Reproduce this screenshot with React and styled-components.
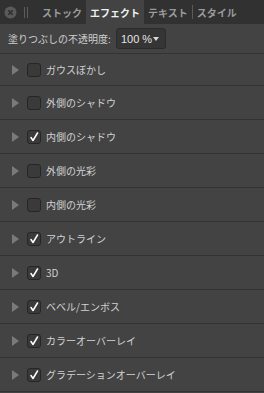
import React from "react";
import styled, { createGlobalStyle } from "styled-components";

const GlobalStyle = createGlobalStyle`
  html, body {
    margin: 0;
    padding: 0;
    background: #434343;
  }
  body {
    font-family: "Noto Sans CJK JP", "Noto Sans", sans-serif;
  }
`;

const Panel = styled.div`
  width: 264px;
  height: 393px;
  overflow: hidden;
  background: #434343;
  display: flex;
  flex-direction: column;
`;

const TabBar = styled.div`
  display: flex;
  align-items: stretch;
  height: 24px;
  background: #313131;
  flex-shrink: 0;
`;

const WindowControls = styled.div`
  display: flex;
  align-items: center;
  width: 34px;
  padding-left: 4px;
  gap: 7px;
`;

const Tab = styled.div`
  display: flex;
  align-items: center;
  padding: 0 ${({ $pad }) => $pad || 3}px;
  font-size: 10px;
  font-weight: bold;
  color: ${({ $active }) => ($active ? "#f0f0f0" : "#9b9b9b")};
  background: ${({ $active }) => ($active ? "#434343" : "transparent")};
`;

const TabDivider = styled.div`
  width: 1px;
  height: 14px;
  align-self: center;
  background: #5a5a5a;
`;

const OpacityRow = styled.div`
  display: flex;
  align-items: center;
  height: 29px;
  padding-left: 8px;
  gap: 5px;
  border-bottom: 1px solid #333;
  flex-shrink: 0;
`;

const Label = styled.span`
  font-size: 10px;
  color: #cfcfcf;
`;

const Dropdown = styled.div`
  display: flex;
  align-items: center;
  justify-content: space-between;
  box-sizing: border-box;
  width: 50px;
  height: 21px;
  padding: 0 6px 0 4px;
  background: #353535;
  border: 1px solid #2b2b2b;
  border-radius: 3px;
  font-family: "Liberation Sans", "Noto Sans", sans-serif;
  font-size: 11px;
  color: #e4e4e4;
  flex-shrink: 0;
`;

const Caret = styled.span`
  width: 0;
  height: 0;
  border-left: 3px solid transparent;
  border-right: 3px solid transparent;
  border-top: 4px solid #d8d8d8;
`;

const List = styled.div`
  display: flex;
  flex-direction: column;
`;

const Row = styled.div`
  display: flex;
  align-items: center;
  height: 33px;
  border-bottom: 1px solid #333;
  padding-left: 12px;

  &:first-child {
    height: 31px;
  }
`;

const Arrow = styled.span`
  width: 0;
  height: 0;
  border-top: 5px solid transparent;
  border-bottom: 5px solid transparent;
  border-left: 7px solid #7a7a7a;
  margin-right: 8px;
`;

const Box = styled.div`
  box-sizing: border-box;
  width: 14px;
  height: 14px;
  border: 1px solid #262626;
  border-radius: 3px;
  background: #3a3a3a;
  display: flex;
  align-items: center;
  justify-content: center;
  margin-right: 5px;
`;

const RowText = styled.span`
  font-size: 10px;
  color: #d2d2d2;
  white-space: nowrap;
`;

const effects = [
  { name: "ガウスぼかし", on: false },
  { name: "外側のシャドウ", on: false },
  { name: "内側のシャドウ", on: true },
  { name: "外側の光彩", on: false },
  { name: "内側の光彩", on: false },
  { name: "アウトライン", on: true },
  { name: "3D", on: true },
  { name: "ベベル/エンボス", on: true },
  { name: "カラーオーバーレイ", on: true },
  { name: "グラデーションオーバーレイ", on: true },
];

const Check = () => (
  <svg width="10" height="10" viewBox="0 0 10 10">
    <path
      d="M2 5.5 L4 8.5 L8.5 1"
      fill="none"
      stroke="#fff"
      strokeWidth="1.5"
      strokeLinecap="round"
      strokeLinejoin="round"
    />
  </svg>
);

const CloseIcon = () => (
  <svg width="13" height="13" viewBox="0 0 13 13">
    <circle cx="6.5" cy="6.5" r="6" fill="#5a5a5a" />
    <path d="M4.3 4.3 L8.7 8.7 M8.7 4.3 L4.3 8.7" stroke="#2e2e2e" strokeWidth="1.6" />
  </svg>
);

const Grip = () => (
  <svg width="5" height="11" viewBox="0 0 5 11">
    <rect x="0" y="0" width="1" height="11" fill="#5c5c5c" />
    <rect x="3" y="0" width="1" height="11" fill="#5c5c5c" />
  </svg>
);

export default function App() {
  return (
    <>
      <GlobalStyle />
      <Panel>
        <TabBar>
          <WindowControls>
            <CloseIcon />
            <Grip />
          </WindowControls>
          <Tab $pad={4}>ストック</Tab>
          <Tab $active $pad={4}>エフェクト</Tab>
          <Tab $pad={4}>テキスト</Tab>
          <TabDivider />
          <Tab $pad={4}>スタイル</Tab>
        </TabBar>
        <OpacityRow>
          <Label>塗りつぶしの不透明度:</Label>
          <Dropdown>
            <span>100 %</span>
            <Caret />
          </Dropdown>
        </OpacityRow>
        <List>
          {effects.map((e) => (
            <Row key={e.name}>
              <Arrow />
              <Box>{e.on && <Check />}</Box>
              <RowText>{e.name}</RowText>
            </Row>
          ))}
        </List>
      </Panel>
    </>
  );
}
